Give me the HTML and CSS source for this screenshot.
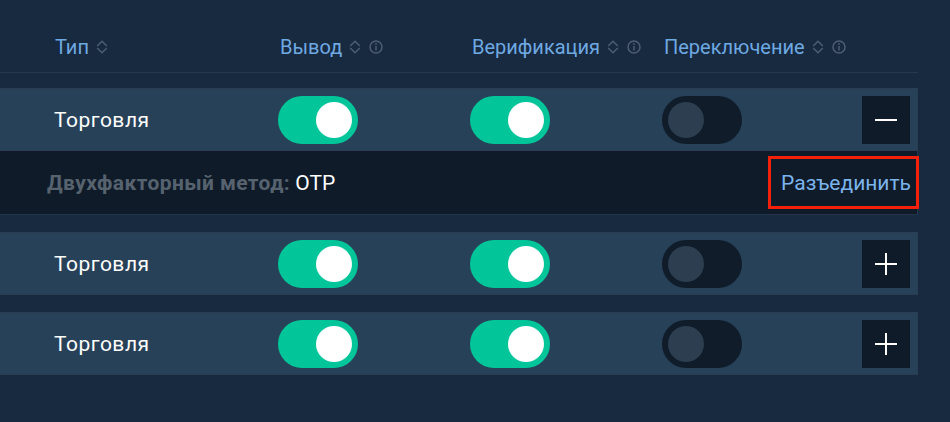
FILE: index.html
```html
<!DOCTYPE html>
<html lang="ru">
<head>
<meta charset="utf-8">
<link rel="stylesheet" href="styles.css">
</head>
<body>
<div class="table">
  <div class="head">
    <div class="hcell first">Тип <svg class="sort" viewBox="0 0 12 14"><path d="M1.2 6 L6 1.2 L10.8 6 M1.2 8 L6 12.8 L10.8 8"/></svg></div>
    <div class="hcell">Вывод <svg class="sort" viewBox="0 0 12 14"><path d="M1.2 6 L6 1.2 L10.8 6 M1.2 8 L6 12.8 L10.8 8"/></svg><svg class="info" viewBox="0 0 14 14"><circle cx="7" cy="7" r="6"/><path d="M7 6 V10.5"/><circle class="dot" cx="7" cy="4" r="0.9"/></svg></div>
    <div class="hcell">Верификация <svg class="sort" viewBox="0 0 12 14"><path d="M1.2 6 L6 1.2 L10.8 6 M1.2 8 L6 12.8 L10.8 8"/></svg><svg class="info" viewBox="0 0 14 14"><circle cx="7" cy="7" r="6"/><path d="M7 6 V10.5"/><circle class="dot" cx="7" cy="4" r="0.9"/></svg></div>
    <div class="hcell">Переключение <svg class="sort" viewBox="0 0 12 14"><path d="M1.2 6 L6 1.2 L10.8 6 M1.2 8 L6 12.8 L10.8 8"/></svg><svg class="info" viewBox="0 0 14 14"><circle cx="7" cy="7" r="6"/><path d="M7 6 V10.5"/><circle class="dot" cx="7" cy="4" r="0.9"/></svg></div>
  </div>

  <div class="group">
    <div class="row">
      <div class="cell first">Торговля</div>
      <div class="cell"><span class="toggle on"><span class="knob"></span></span></div>
      <div class="cell"><span class="toggle on"><span class="knob"></span></span></div>
      <div class="cell"><span class="toggle off"><span class="knob"></span></span></div>
      <div class="cell end"><button class="expand minus" aria-label="Свернуть"><span class="bar h"></span></button></div>
    </div>
    <div class="detail">
      <div class="method"><span class="label">Двухфакторный метод:</span> <span class="value">OTP</span></div>
      <button class="unlink">Разъединить</button>
    </div>
  </div>

  <div class="group">
    <div class="row">
      <div class="cell first">Торговля</div>
      <div class="cell"><span class="toggle on"><span class="knob"></span></span></div>
      <div class="cell"><span class="toggle on"><span class="knob"></span></span></div>
      <div class="cell"><span class="toggle off"><span class="knob"></span></span></div>
      <div class="cell end"><button class="expand plus" aria-label="Развернуть"><span class="bar h"></span><span class="bar v"></span></button></div>
    </div>
  </div>

  <div class="group">
    <div class="row">
      <div class="cell first">Торговля</div>
      <div class="cell"><span class="toggle on"><span class="knob"></span></span></div>
      <div class="cell"><span class="toggle on"><span class="knob"></span></span></div>
      <div class="cell"><span class="toggle off"><span class="knob"></span></span></div>
      <div class="cell end"><button class="expand plus" aria-label="Развернуть"><span class="bar h"></span><span class="bar v"></span></button></div>
    </div>
  </div>
</div>
</body>
</html>
```
FILE: styles.css
```css
* { box-sizing: border-box; }
html, body { margin: 0; padding: 0; }
body {
  background: #172a40;
  font-family: Roboto, "Noto Sans", sans-serif;
  width: 950px;
  height: 422px;
  overflow: hidden;
}
.table {
  width: 918px;
  display: flex;
  flex-direction: column;
  gap: 17px;
}
.head {
  display: grid;
  grid-template-columns: 280px 192px 192px 1fr;
  height: 73px;
  align-items: end;
  padding-bottom: 13px;
  border-bottom: 1px solid #26394c;
  margin-bottom: -2px;
}
.hcell {
  display: flex;
  align-items: center;
  color: #6fa9e2;
  font-size: 20px;
  line-height: 24px;
  white-space: nowrap;
}
.hcell.first { padding-left: 55px; }
.sort {
  width: 12px;
  height: 14px;
  margin-left: 7px;
  fill: none;
  stroke: #4d5e70;
  stroke-width: 1.5;
}
.info {
  width: 14px;
  height: 14px;
  margin-left: 8px;
  fill: none;
  stroke: #4d5e70;
  stroke-width: 1.5;
}
.info .dot { fill: #4d5e70; stroke: none; }
.group { display: flex; flex-direction: column; }
.row {
  display: grid;
  grid-template-columns: 278px 192px 192px 1fr auto;
  align-items: center;
  height: 63px;
  background: #274159;
  border: 1px solid #2b3e51;
  border-left: none;
}
.cell.first {
  padding-left: 54px;
  color: #ffffff;
  font-size: 21px;
  font-weight: 400;
  letter-spacing: 0.5px;
}
.cell.end { display: flex; justify-content: flex-end; padding-right: 7px; }
.toggle {
  display: flex;
  align-items: center;
  width: 80px;
  height: 48px;
  border-radius: 24px;
  padding: 0 6px;
}
.toggle.on { background: #02c69a; justify-content: flex-end; }
.toggle.off { background: #101c29; justify-content: flex-start; }
.knob {
  width: 36px;
  height: 36px;
  border-radius: 50%;
}
.toggle.on .knob { background: #ffffff; }
.toggle.off .knob { background: #2c3e4f; }
.expand {
  position: relative;
  width: 48px;
  height: 48px;
  border: none;
  padding: 0;
  background: #0f1b28;
  cursor: pointer;
}
.bar { position: absolute; background: #ffffff; }
.bar.h { width: 22px; height: 2px; left: 13px; top: 23px; }
.bar.v { width: 2px; height: 22px; left: 23px; top: 13px; }
.detail {
  display: flex;
  align-items: center;
  justify-content: space-between;
  height: 64px;
  background: #101b29;
  border-bottom: 1px solid #22354a;
  border-right: 1px solid #22354a;
  padding-left: 47px;
}
.method { font-size: 21px; }
.label { color: #56636f; font-weight: 700; letter-spacing: 0.4px; }
.value { color: #ffffff; }
.unlink {
  font-family: Roboto, "Noto Sans", sans-serif;
  font-size: 21px;
  color: #7bb4ec;
  background: transparent;
  border: 3px solid #f5200a;
  height: 53px;
  padding: 0 5px 0 10px;
  margin-right: -2px;
  cursor: pointer;
}
```
